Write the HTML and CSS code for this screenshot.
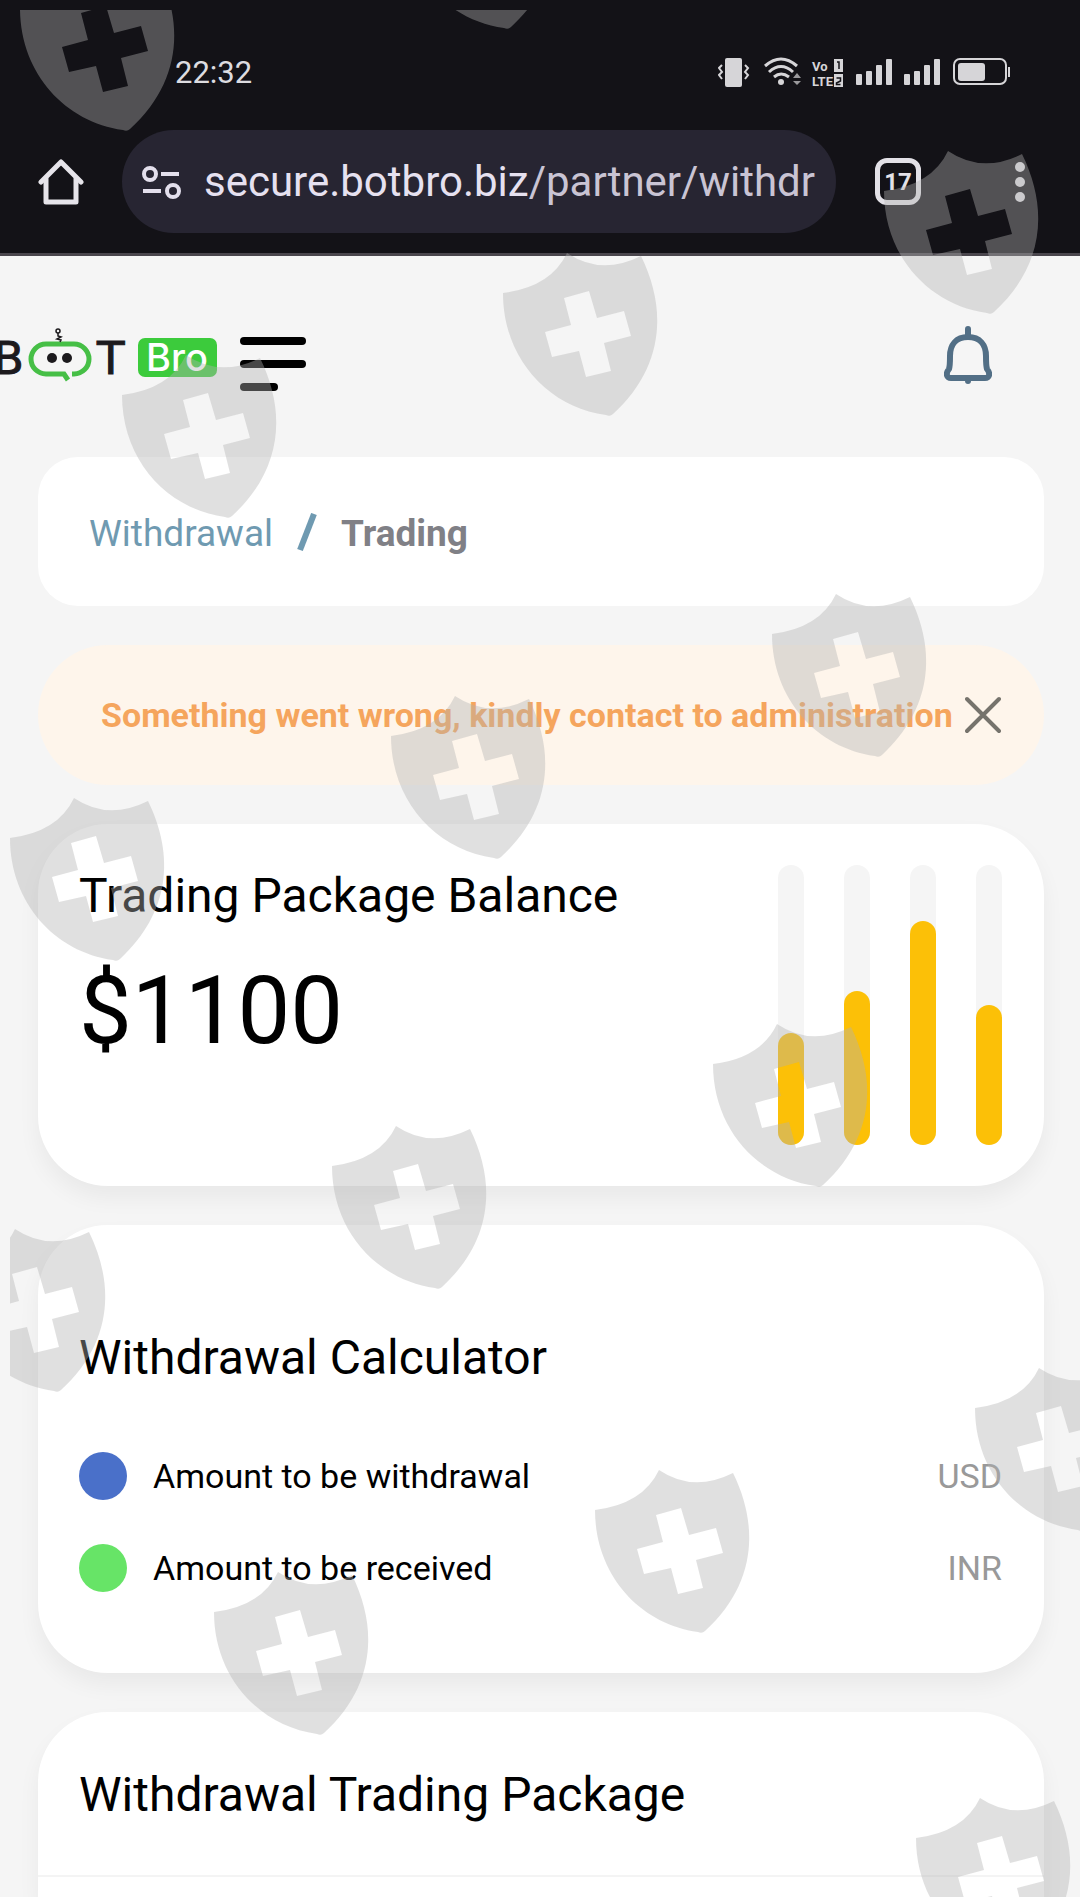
FILE: index.html
```
<!DOCTYPE html>
<html lang="en">
<head>
    <meta charset="UTF-8">
    <meta name="viewport" content="width=device-width, initial-scale=1.0">
    <title>Withdrawal - Trading</title>
    <link rel="stylesheet" href="styles.css">
</head>
<body>
    <div class="screen">
        <div class="browser">
            <div class="status-bar">
                <span class="clock">22:32</span>
                <svg class="status-icons" width="294" height="32" viewBox="0 0 294 32" fill="#d6d5d8">
                    <!-- vibrate -->
                    <rect x="7" y="2" width="17" height="29" rx="2"/>
                    <path d="M4 9l-3 3 3 4-3 3 3 4M27 9l3 3-3 4 3 3-3 4" fill="none" stroke="#d6d5d8" stroke-width="2"/>
                    <!-- wifi -->
                    <g fill="none" stroke="#d6d5d8" stroke-width="3">
                        <path d="M47 10q16-14 32 0"/>
                        <path d="M51 16q12-11 24 0"/>
                        <path d="M56 21q7-6 15 0"/>
                    </g>
                    <circle cx="63" cy="26" r="3"/>
                    <path d="M75 22l4-5 4 5zM75 25l4 4 4-4z" fill="#9a999c"/>
                    <!-- volte -->
                    <text class="volte" x="94" y="15">Vo</text>
                    <text class="volte" x="94" y="30">LTE</text>
                    <rect x="116" y="3" width="9" height="13"/>
                    <rect x="116" y="18" width="9" height="13"/>
                    <path d="M119 6h2v7M118.500 22h4v3l-4 2v1.500h4" fill="none" stroke="#131217" stroke-width="1.500"/>
                    <!-- signal -->
                    <rect x="138" y="18" width="6" height="11" rx="1"/>
                    <rect x="148" y="15" width="6" height="14" rx="1"/>
                    <rect x="158" y="9" width="6" height="20" rx="1"/>
                    <rect x="168" y="3" width="6" height="26" rx="1"/>
                    <rect x="186" y="18" width="6" height="11" rx="1"/>
                    <rect x="196" y="15" width="6" height="14" rx="1"/>
                    <rect x="206" y="9" width="6" height="20" rx="1"/>
                    <rect x="216" y="3" width="6" height="26" rx="1"/>
                    <!-- battery -->
                    <rect x="236" y="3" width="52" height="25" rx="6" fill="none" stroke="#d6d5d8" stroke-width="2"/>
                    <rect x="240" y="7" width="27" height="18" rx="3"/>
                    <rect x="290" y="11" width="2" height="10"/>
                </svg>
            </div>
            <div class="address-bar">
                <button class="icon-btn home" aria-label="Home">
                    <svg width="46" height="48" viewBox="0 0 46 48" fill="none" stroke="#e6e4ea" stroke-width="5" stroke-linecap="round" stroke-linejoin="round">
                        <path d="M3 24L23 4l20 20"/>
                        <path d="M8 21v23h30V21"/>
                    </svg>
                </button>
                <div class="url">
                    <svg width="40" height="34" viewBox="0 0 40 34" fill="none" stroke="#e3dfec" stroke-width="4">
                        <circle cx="8" cy="9" r="6"/>
                        <path d="M19 9h18M1 26h18"/>
                        <circle cx="31" cy="26" r="6"/>
                    </svg>
                    <span class="url-text">secure.botbro.biz<span class="url-path">/partner/withdr</span></span>
                </div>
                <button class="tabs">17</button>
                <button class="icon-btn more" aria-label="More">
                    <svg width="12" height="42" viewBox="0 0 12 42" fill="#dddbe0">
                        <circle cx="6" cy="6" r="5"/>
                        <circle cx="6" cy="21" r="5"/>
                        <circle cx="6" cy="36" r="5"/>
                    </svg>
                </button>
            </div>
        </div>

        <header class="header">
            <svg class="logo" width="218" height="76" viewBox="0 2 218 76">
                <text class="logo-letter" x="-7" y="50">B</text>
                <path d="M72 50H74a14 14 0 0 0 0-30H46a14 14 0 0 0 0 30H64l4 6" fill="none" stroke="#46bf46" stroke-width="5"/>
                <circle cx="52" cy="34" r="5" fill="#1c1a1d"/>
                <circle cx="67" cy="34" r="5" fill="#1c1a1d"/>
                <circle cx="58" cy="7" r="2" fill="none" stroke="#1c1a1d" stroke-width="1.500"/>
                <path d="M58 9v3l3 1-4 2 4 1-1 2" fill="none" stroke="#1c1a1d" stroke-width="1.500"/>
                <text class="logo-letter" x="97" y="50">T</text>
                <rect x="138" y="14" width="79" height="39" rx="7" fill="#3ccb3c"/>
                <text class="logo-bro" x="146" y="47">Bro</text>
            </svg>
            <button class="icon-btn menu" aria-label="Menu">
                <svg width="66" height="56" viewBox="0 0 66 56">
                    <rect y="1" width="66" height="8" rx="4"/>
                    <rect y="24" width="66" height="8" rx="4"/>
                    <rect y="47" width="38" height="8" rx="4"/>
                </svg>
            </button>
            <button class="icon-btn bell" aria-label="Notifications">
                <svg width="48" height="76" viewBox="0 0 48 76" fill="none" stroke="#526f86" stroke-linecap="round" stroke-linejoin="round">
                    <path d="M24 11C12 11 6 19 6 30C6 38 6 40 5 43C1 48 3 52 7 52H41C45 52 47 48 43 43C42 40 42 38 42 30C42 19 36 11 24 11Z" stroke-width="6"/>
                    <path d="M24 3v7M24 54v1" stroke-width="6"/>
                </svg>
            </button>
        </header>

        <main class="content">
            <nav class="breadcrumb">
                <a href="#">Withdrawal</a>
                <svg width="20" height="42" viewBox="0 0 20 42" stroke="#6f9ab1" stroke-width="6"><path d="M3 37L17 1"/></svg>
                <span class="current">Trading</span>
            </nav>

            <div class="alert" role="alert">
                <span>Something went wrong, kindly contact to administration</span>
                <button class="icon-btn close" aria-label="Close">
                    <svg width="36" height="38" viewBox="0 0 36 38" stroke="#76736c" stroke-width="4" stroke-linecap="round"><path d="M2 3l32 32M34 3L2 35"/></svg>
                </button>
            </div>

            <section class="card balance">
                <div>
                    <h2>Trading Package Balance</h2>
                    <p class="amount">$1100</p>
                </div>
                <div class="bars">
                    <div class="bar"><div class="fill" style="height: 40%"></div></div>
                    <div class="bar"><div class="fill" style="height: 55%"></div></div>
                    <div class="bar"><div class="fill" style="height: 80%"></div></div>
                    <div class="bar"><div class="fill" style="height: 50%"></div></div>
                </div>
            </section>

            <section class="card calculator">
                <h2>Withdrawal Calculator</h2>
                <ul class="rows">
                    <li><i class="dot blue"></i><span>Amount to be withdrawal</span><span class="unit">USD</span></li>
                    <li><i class="dot green"></i><span>Amount to be received</span><span class="unit">INR</span></li>
                </ul>
            </section>

            <section class="card package">
                <h2>Withdrawal Trading Package</h2>
            </section>
        </main>

        <svg class="shields" aria-hidden="true">
            <defs>
                <path id="shield" fill-rule="evenodd" d="M0 40Q48 34 64 0Q98 23 138 3C165 58 160 115 110 161Q107 164 103 162C45 154 0 105 0 40ZM61 45L68 72L42 79L49 104L76 98L83 124L108 118L101 90L128 83L121 58L94 65L86 38Z"/>
            </defs>
            <g transform="translate(-10 -10)">
                <use href="#shield" x="20" y="-32"/>
                <use href="#shield" x="401" y="-134"/>
                <use href="#shield" x="884" y="151"/>
                <use href="#shield" x="503" y="253"/>
                <use href="#shield" x="122" y="355"/>
                <use href="#shield" x="772" y="594"/>
                <use href="#shield" x="391" y="696"/>
                <use href="#shield" x="10" y="798"/>
                <use href="#shield" x="713" y="1024"/>
                <use href="#shield" x="332" y="1126"/>
                <use href="#shield" x="-49" y="1229"/>
                <use href="#shield" x="975" y="1368"/>
                <use href="#shield" x="595" y="1470"/>
                <use href="#shield" x="214" y="1572"/>
                <use href="#shield" x="916" y="1798"/>
            </g>
        </svg>
    </div>
</body>
</html>
```
FILE: styles.css
```
* {
    box-sizing: border-box;
}
body {
    margin: 0;
    font-family: Roboto, "Noto Sans", sans-serif;
    background: #f5f5f5;
    color: #000;
}
h2, p, ul {
    margin: 0;
    padding: 0;
    font-weight: 400;
}
button {
    padding: 0;
    border: none;
    background: none;
    font-family: inherit;
}
svg {
    display: block;
    flex-shrink: 0;
}
.screen {
    position: relative;
    display: flex;
    flex-direction: column;
    min-height: 100vh;
    overflow: hidden;
}

/* browser chrome */
.browser {
    background: #131217;
    border-bottom: 3px solid #4a464d;
    padding-bottom: 20px;
}
.status-bar {
    display: flex;
    align-items: center;
    justify-content: space-between;
    height: 130px;
    padding: 14px 68px 0 175px;
}
.clock {
    font-size: 31px;
    color: #dddce0;
}
.volte {
    font: bold 13px "Liberation Sans Narrow", Roboto, sans-serif;
}
.address-bar {
    display: flex;
    align-items: center;
    padding: 0 54px 0 38px;
}
.url {
    flex: 1;
    display: flex;
    align-items: center;
    gap: 22px;
    height: 103px;
    margin: 0 39px 0 38px;
    padding-left: 20px;
    border-radius: 52px;
    background: #272532;
    overflow: hidden;
}
.url-text {
    font-size: 42px;
    white-space: nowrap;
    color: #e6e1f0;
}
.url-path {
    color: #c9c4d4;
}
.tabs {
    width: 46px;
    height: 47px;
    margin-right: 93px;
    border: 5px solid #e3e1e7;
    border-radius: 12px;
    font-size: 24px;
    font-weight: 700;
    color: #e3e1e7;
}

/* site header */
.header {
    display: flex;
    align-items: center;
    height: 201px;
    padding: 14px 88px 0 0;
}
.logo-letter {
    font: 45px "DejaVu Sans", sans-serif;
    fill: #1c1a1d;
    stroke: #1c1a1d;
    stroke-width: 1px;
}
.logo-bro {
    font: 500 38px Inter, sans-serif;
    fill: #fff;
}
.menu {
    margin-left: 22px;
}
.bell {
    margin-left: auto;
}

.content {
    flex: 1;
    display: flex;
    flex-direction: column;
    gap: 39px;
    padding: 0 36px 0 38px;
}
.breadcrumb {
    display: flex;
    align-items: center;
    gap: 24px;
    height: 149px;
    padding: 4px 51px 0;
    border-radius: 40px;
    background: #fff;
    font-size: 37px;
}
.breadcrumb a {
    color: #6f9ab1;
    text-decoration: none;
}
.breadcrumb .current {
    font-weight: 700;
    color: #808086;
}
.alert {
    position: relative;
    display: flex;
    align-items: center;
    height: 140px;
    padding: 0 63px;
    border-radius: 70px;
    background: #fef5eb;
    font-size: 34px;
    font-weight: 700;
    white-space: nowrap;
    color: #f5a55d;
}
.close {
    position: absolute;
    right: 43px;
}

/* cards */
.card {
    border-radius: 70px;
    background: #fff;
    box-shadow: 0 12px 22px rgba(0, 0, 0, 0.05);
}
.card h2 {
    font-size: 48px;
    line-height: 62px;
}
.balance {
    display: flex;
    justify-content: space-between;
    padding: 41px 42px 41px 41px;
}
.amount {
    margin-top: 30px;
    font-size: 94px;
    line-height: 108px;
}
.bars {
    display: flex;
    gap: 40px;
    height: 280px;
}
.bar {
    display: flex;
    align-items: flex-end;
    width: 26px;
    border-radius: 13px;
    background: #f5f5f5;
}
.fill {
    width: 100%;
    border-radius: 13px;
    background: #fcc007;
}
.calculator {
    padding: 102px 42px 81px 41px;
}
.rows {
    display: flex;
    flex-direction: column;
    gap: 44px;
    margin-top: 63px;
    list-style: none;
}
.rows li {
    display: flex;
    align-items: center;
    height: 48px;
    font-size: 34px;
}
.dot {
    width: 48px;
    height: 48px;
    margin-right: 26px;
    border-radius: 50%;
}
.blue {
    background: #4a70c9;
}
.green {
    background: #67e467;
}
.unit {
    margin-left: auto;
    color: #999;
}
.package {
    flex: 1;
    border-radius: 70px 70px 0 0;
}
.package h2 {
    padding: 52px 41px 49px;
    border-bottom: 2px solid #f4f4f4;
}

/* shield pattern over the whole screen */
.shields {
    position: absolute;
    top: 10px;
    left: 10px;
    width: calc(100% - 10px);
    height: calc(100% - 10px);
    fill: rgba(178, 178, 178, 0.4);
    pointer-events: none;
}
```
